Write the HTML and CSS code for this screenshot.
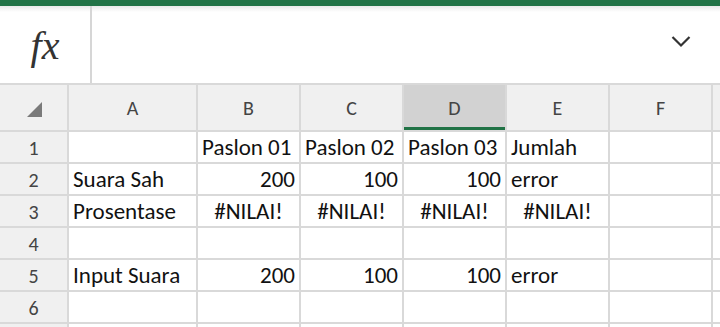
FILE: index.html
```html
<!DOCTYPE html>
<html>
<head>
<meta charset="utf-8">
<link rel="stylesheet" href="styles.css">
</head>
<body>
<div class="app">
  <div class="ribbon-edge"></div>
  <div class="formula-bar">
    <div class="fx-box"><span class="fx">fx</span></div>
    <div class="formula-input"></div>
    <div class="expand">
      <svg width="20" height="14" viewBox="0 0 20 14"><polyline points="1.5,2 10,10.5 18.5,2" fill="none" stroke="#333" stroke-width="2.2"/></svg>
    </div>
  </div>
  <div class="sheet">
    <div class="hdr corner"><span class="tri"></span></div>
    <div class="hdr col">A</div>
    <div class="hdr col">B</div>
    <div class="hdr col">C</div>
    <div class="hdr col sel">D</div>
    <div class="hdr col">E</div>
    <div class="hdr col">F</div>
    <div class="hdr col"></div>

    <div class="hdr row">1</div>
    <div class="cell"></div>
    <div class="cell">Paslon 01</div>
    <div class="cell">Paslon 02</div>
    <div class="cell">Paslon 03</div>
    <div class="cell">Jumlah</div>
    <div class="cell"></div>
    <div class="cell"></div>

    <div class="hdr row">2</div>
    <div class="cell">Suara Sah</div>
    <div class="cell num">200</div>
    <div class="cell num">100</div>
    <div class="cell num">100</div>
    <div class="cell">error</div>
    <div class="cell"></div>
    <div class="cell"></div>

    <div class="hdr row">3</div>
    <div class="cell">Prosentase</div>
    <div class="cell err">#NILAI!</div>
    <div class="cell err">#NILAI!</div>
    <div class="cell err">#NILAI!</div>
    <div class="cell err">#NILAI!</div>
    <div class="cell"></div>
    <div class="cell"></div>

    <div class="hdr row">4</div>
    <div class="cell"></div>
    <div class="cell"></div>
    <div class="cell"></div>
    <div class="cell"></div>
    <div class="cell"></div>
    <div class="cell"></div>
    <div class="cell"></div>

    <div class="hdr row">5</div>
    <div class="cell">Input Suara</div>
    <div class="cell num">200</div>
    <div class="cell num">100</div>
    <div class="cell num">100</div>
    <div class="cell">error</div>
    <div class="cell"></div>
    <div class="cell"></div>

    <div class="hdr row">6</div>
    <div class="cell"></div>
    <div class="cell"></div>
    <div class="cell"></div>
    <div class="cell"></div>
    <div class="cell"></div>
    <div class="cell"></div>
    <div class="cell"></div>

    <div class="hdr row"></div>
    <div class="cell"></div>
    <div class="cell"></div>
    <div class="cell"></div>
    <div class="cell"></div>
    <div class="cell"></div>
    <div class="cell"></div>
    <div class="cell"></div>
  </div>
</div>
</body>
</html>
```

FILE: styles.css
```css
html, body {
  margin: 0;
  padding: 0;
  background: #ffffff;
}
.app {
  width: 720px;
  height: 327px;
  overflow: hidden;
  font-family: Carlito, Lato, "Noto Sans", sans-serif;
}
.ribbon-edge {
  height: 6px;
  background: #217346;
}
.formula-bar {
  height: 77px;
  display: flex;
  background: linear-gradient(#e9e9e9 0px, #ffffff 6px);
}
.fx-box {
  width: 90px;
  border-right: 2px solid #d6d6d6;
  display: flex;
  align-items: center;
  justify-content: center;
}
.fx {
  font-family: "Liberation Serif", "DejaVu Serif", serif;
  font-style: italic;
  font-size: 40px;
  color: #333333;
  margin-top: 2px;
  letter-spacing: 0px;
}
.formula-input {
  flex: 1;
}
.expand {
  width: 46px;
  display: flex;
  align-items: center;
  justify-content: flex-start;
  padding-top: 2px;
}
.expand svg {
  margin-left: -3px;
  margin-top: -8px;
}
.sheet {
  display: grid;
  grid-template-columns: 67px 127px 101px 101px 101px 101px 101px 1fr;
  grid-template-rows: 45px repeat(7, 30px);
  gap: 2px;
  padding-top: 2px;
  background: #d9d9d9;
}
.hdr {
  background: #f0f0f0;
  color: #444444;
  font-size: 20px;
  display: flex;
  justify-content: center;
}
.hdr.col {
  align-items: center;
  padding-top: 1px;
}
.hdr.sel {
  background: #d2d2d2;
  box-shadow: inset 0 -3px 0 #217346;
}
.hdr.row {
  align-items: flex-end;
  padding-bottom: 2px;
  box-sizing: border-box;
}
.corner {
  align-items: flex-start;
}
.tri {
  width: 0;
  height: 0;
  margin-top: 17px;
  margin-left: 1px;
  border-left: 15px solid transparent;
  border-bottom: 15px solid #7a7a7a;
}
.cell {
  background: #ffffff;
  color: #111111;
  font-size: 23px;
  display: flex;
  align-items: flex-end;
  padding: 0 4px 1px 4px;
  box-sizing: border-box;
  white-space: nowrap;
  overflow: visible;
}
.cell.num {
  justify-content: flex-end;
}
.cell.err {
  justify-content: center;
}
```
